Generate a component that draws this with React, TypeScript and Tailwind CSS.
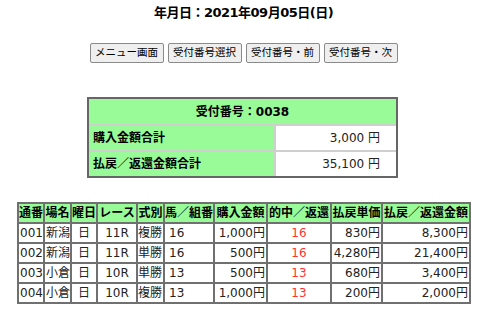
import React from "react";

const rows = [
  { no: "001", place: "新潟", day: "日", race: "11R", type: "複勝", horse: "16", buy: "1,000円", hit: "16", unit: "830円", pay: "8,300円" },
  { no: "002", place: "新潟", day: "日", race: "11R", type: "単勝", horse: "16", buy: "500円", hit: "16", unit: "4,280円", pay: "21,400円" },
  { no: "003", place: "小倉", day: "日", race: "10R", type: "単勝", horse: "13", buy: "500円", hit: "13", unit: "680円", pay: "3,400円" },
  { no: "004", place: "小倉", day: "日", race: "10R", type: "複勝", horse: "13", buy: "1,000円", hit: "13", unit: "200円", pay: "2,000円" },
];

const headers = ["通番", "場名", "曜日", "レース", "式別", "馬／組番", "購入金額", "的中／返還", "払戻単価", "払戻／返還金額"];

const cell = "h-[20px] border border-[#707070] flex items-center whitespace-nowrap overflow-hidden";

export default function App() {
  return (
    <div className="w-[480px] h-[311px] overflow-hidden bg-white text-[#222] font-[family-name:'DejaVu_Sans','Noto_Sans_CJK_JP',sans-serif]">
      <div className="h-[25px] flex items-center justify-center pl-[7px] text-[13px] font-bold tracking-[-0.5px] text-black">
        年月日：2021年09月05日(日)
      </div>

      <div className="mt-[18px] flex justify-center gap-[4px] pl-[7px]">
        {["メニュー画面", "受付番号選択", "受付番号・前", "受付番号・次"].map((t) => (
          <div
            key={t}
            className="w-[74px] h-[20px] border border-[#8a8a8a] rounded-[2px] bg-[#efefef] text-[10.5px] text-black flex items-center justify-center"
          >
            {t}
          </div>
        ))}
      </div>

      <div className="mt-[34px] flex justify-center pl-[5px]">
        <div className="w-[311px] border-2 border-[#666] bg-[#cfcfcf] flex flex-col gap-[2px] text-[12px]">
          <div className="h-[25px] bg-[#98fb98] flex items-center justify-center font-bold text-black">
            受付番号：0038
          </div>
          <div className="h-[24px] flex gap-[2px]">
            <div className="w-[185px] bg-[#98fb98] pl-[4px] font-bold text-black flex items-center">購入金額合計</div>
            <div className="flex-1 bg-white flex items-center justify-end pr-[16px]">3,000 円</div>
          </div>
          <div className="h-[24px] flex gap-[2px]">
            <div className="w-[185px] bg-[#98fb98] pl-[4px] font-bold text-black flex items-center">払戻／返還金額合計</div>
            <div className="flex-1 bg-white flex items-center justify-end pr-[16px]">35,100 円</div>
          </div>
        </div>
      </div>

      <div className="mt-[24px] flex justify-center pl-[8px]">
        <div className="w-[454px] border border-[#707070] grid grid-cols-[26px_27px_26px_40px_27px_50px_53px_64px_51px_88px] text-[12px]">
          {headers.map((h) => (
            <div key={h} className={`${cell} bg-[#98fb98] font-bold text-black justify-center`}>
              {h}
            </div>
          ))}
          {rows.map((r) => (
            <React.Fragment key={r.no}>
              <div className={`${cell} pl-[1px]`}>{r.no}</div>
              <div className={`${cell} pl-[1px]`}>{r.place}</div>
              <div className={`${cell} justify-center`}>{r.day}</div>
              <div className={`${cell} justify-center`}>{r.race}</div>
              <div className={`${cell}`}>{r.type}</div>
              <div className={`${cell} pl-[4px]`}>{r.horse}</div>
              <div className={`${cell} justify-end pr-[1px]`}>{r.buy}</div>
              <div className={`${cell} justify-center text-[#ff3333]`}>{r.hit}</div>
              <div className={`${cell} justify-end pr-[1px]`}>{r.unit}</div>
              <div className={`${cell} justify-end pr-[1px]`}>{r.pay}</div>
            </React.Fragment>
          ))}
        </div>
      </div>
    </div>
  );
}
